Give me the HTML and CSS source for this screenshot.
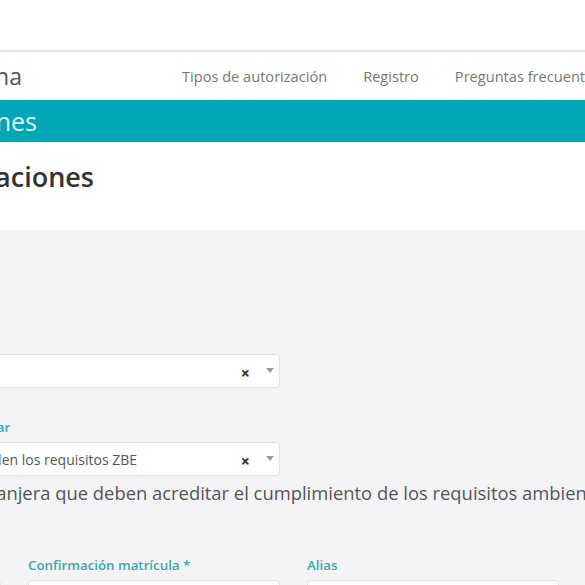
FILE: index.html
```html
<!DOCTYPE html>
<html lang="es">
<head>
    <meta charset="UTF-8">
    <meta name="viewport" content="width=device-width, initial-scale=1.0">
    <title>Autorizaciones ZBE</title>
    <link rel="stylesheet" href="styles.css">
</head>
<body>
    <div class="browser-top"></div>

    <nav class="navbar">
        <div class="brand"><span>ZBE Pamplona</span></div>
        <ul class="nav-links">
            <li><a href="#">Tipos de autorización</a></li>
            <li><a href="#">Registro</a></li>
            <li><a href="#">Preguntas frecuentes</a></li>
            <li><a href="#">Contacto</a></li>
        </ul>
    </nav>

    <div class="section-bar">
        <div class="bar-title"><span>Zona de Bajas Emisiones</span></div>
    </div>

    <div class="page-header">
        <h1 class="page-title"><span>Autorizaciones</span></h1>
    </div>

    <main class="content">
        <form class="form-grid">
            <div class="field span-2">
                <label>Tipo de autorización</label>
                <div class="select">
                    <span class="select-value"></span>
                    <span class="select-clear">×</span>
                    <span class="select-arrow"></span>
                </div>
            </div>

            <div class="field span-2">
                <label>Seleccione el tipo de vehículo a autorizar</label>
                <div class="select">
                    <span class="select-value">Vehículos extranjeros que no cumplen los requisitos ZBE</span>
                    <span class="select-clear">×</span>
                    <span class="select-arrow"></span>
                </div>
            </div>

            <p class="note span-3">Vehículos con matrícula extranjera que deben acreditar el cumplimiento de los requisitos ambientales</p>

            <div class="field">
                <label>Matrícula *</label>
                <input type="text">
            </div>
            <div class="field">
                <label>Confirmación matrícula *</label>
                <input type="text">
            </div>
            <div class="field">
                <label>Alias</label>
                <input type="text">
            </div>
        </form>
    </main>
</body>
</html>
```

FILE: styles.css
```css
* {
    margin: 0;
    padding: 0;
    box-sizing: border-box;
}

body {
    font-family: 'Open Sans', 'Noto Sans', sans-serif;
    background: #f4f4f6;
    overflow: hidden;
    height: 585px;
}

.browser-top {
    height: 52px;
    background: white;
    border-bottom: 2px solid #e6e6e6;
}

.navbar {
    display: flex;
    align-items: center;
    height: 48px;
    background: white;
    white-space: nowrap;
}

.brand {
    width: 22px;
    display: flex;
    justify-content: flex-end;
    font-size: 23px;
    color: #555;
}

.nav-links {
    display: flex;
    list-style: none;
    margin-left: 142px;
}

.nav-links a {
    display: block;
    padding: 0 18px;
    font-size: 14.6px;
    color: #777;
    text-decoration: none;
}

.section-bar {
    height: 42px;
    background: #00a6b4;
    box-shadow: 0 2px 3px rgba(0,0,0,0.2);
    display: flex;
    align-items: center;
    white-space: nowrap;
}

.bar-title {
    width: 37px;
    display: flex;
    justify-content: flex-end;
    font-size: 25px;
    color: #e2f7f7;
}

.page-header {
    height: 88px;
    background: white;
    padding-top: 16px;
    white-space: nowrap;
}

.page-title {
    width: 94px;
    display: flex;
    justify-content: flex-end;
    font-size: 27px;
    font-weight: 600;
    color: #333;
}

.content {
    padding-top: 100px;
}

.form-grid {
    display: grid;
    grid-template-columns: repeat(3, 252px);
    column-gap: 27px;
    margin-left: -251px;
}

.span-2 {
    grid-column: span 2;
}

.span-3 {
    grid-column: span 3;
}

.field {
    margin-bottom: 30px;
}

.field label {
    display: block;
    font-size: 13.3px;
    font-weight: 600;
    line-height: 18px;
    color: #35a9ae;
    margin-bottom: 6px;
    white-space: nowrap;
}

.select,
.field input {
    display: flex;
    align-items: center;
    width: 100%;
    height: 34px;
    background: white;
    border: 1px solid #e2e2e4;
    border-radius: 4px;
    box-shadow: 0 1px 2px rgba(0,0,0,0.04);
}

.select-value {
    flex: 1;
    padding-left: 18px;
    font-size: 14px;
    color: #555;
    white-space: nowrap;
    overflow: hidden;
}

.select-clear {
    font-size: 16px;
    font-weight: 700;
    color: #333;
    margin-top: 4px;
    margin-right: 16px;
}

.select-arrow {
    width: 0;
    height: 0;
    border-left: 4px solid transparent;
    border-right: 4px solid transparent;
    border-top: 5px solid #999;
    margin-right: 5px;
    margin-top: -2px;
}

.note {
    font-size: 18.4px;
    color: #555;
    white-space: nowrap;
    padding-left: 5px;
    margin-top: -26px;
    margin-bottom: 51px;
}
```
